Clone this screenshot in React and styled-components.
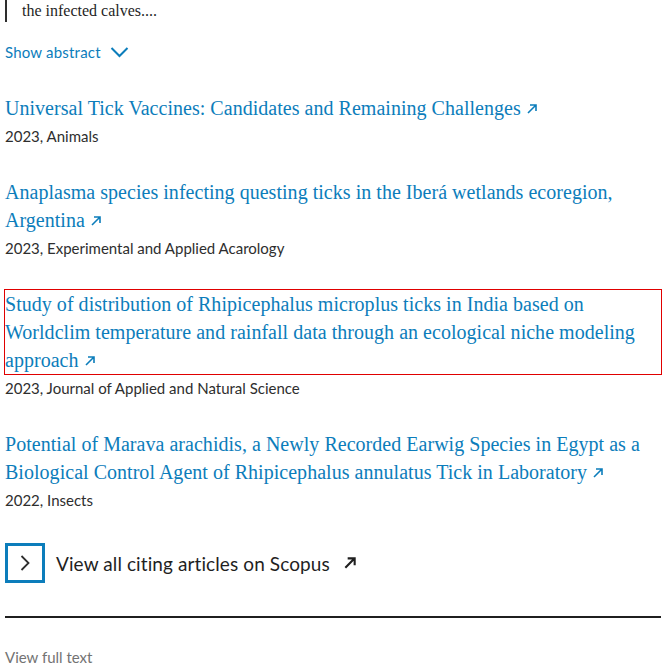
import React from "react";
import styled, { createGlobalStyle } from "styled-components";

const Global = createGlobalStyle`
  html, body { margin: 0; padding: 0; background: #fff; }
  body { font-family: "Lato", "Open Sans", sans-serif; }
`;

const Page = styled.div`
  padding: 0 5px;
  width: 656px;
`;

const Abstract = styled.div`
  border-left: 2px solid #2e2e2e;
  padding-left: 15px;
  font-family: "Liberation Serif", serif;
  font-size: 16px;
  line-height: 21px;
  color: #1f1f1f;
  padding-bottom: 1px;
`;

const ShowAbstract = styled.button`
  display: flex;
  align-items: center;
  gap: 9px;
  margin: 20px 0 0 0;
  padding: 0;
  border: none;
  background: none;
  font-family: "Lato", sans-serif;
  font-size: 15px;
  letter-spacing: 0.2px;
  color: #0c7dbb;
  line-height: 20px;
  cursor: pointer;
`;

const List = styled.div`
  display: flex;
  flex-direction: column;
  gap: 28px;
  margin-top: 32px;
`;

const Item = styled.div``;

const Title = styled.a`
  display: block;
  font-family: "Liberation Serif", serif;
  font-size: 20px;
  letter-spacing: 0.03px;
  line-height: 28px;
  color: #0c7dbb;
  text-decoration: none;
  outline: ${(p) => (p.$focused ? "1px solid #e00000" : "none")};
`;

const Meta = styled.div`
  font-family: "Lato", sans-serif;
  font-size: 15px;
  line-height: 28px;
  color: #2e2e2e;
`;

const Scopus = styled.a`
  display: flex;
  align-items: center;
  gap: 11px;
  margin-top: 29px;
  text-decoration: none;
  color: #1f1f1f;
  font-family: "Lato", sans-serif;
  font-size: 19px;
  letter-spacing: 0.1px;
`;

const ArrowBox = styled.span`
  display: flex;
  align-items: center;
  justify-content: center;
  width: 34px;
  height: 34px;
  border: 3px solid #0c7dbb;
`;

const Rule = styled.hr`
  border: none;
  height: 2px;
  background: #1f1f1f;
  margin: 33px 0 0 0;
`;

const FullText = styled.div`
  margin-top: 29px;
  font-family: "Lato", sans-serif;
  font-size: 15px;
  color: #737373;
  line-height: 20px;
`;

const Ext = ({ size = 12, color = "#0c7dbb", stroke = 1.6, gap = 5 }) => (
  <svg width={size} height={size} viewBox="0 0 12 12" style={{ marginLeft: gap, verticalAlign: "baseline" }}>
    <path d="M2 10 L10 2 M4 2 H10 V8" fill="none" stroke={color} strokeWidth={stroke} />
  </svg>
);

const items = [
  { t: "Universal Tick Vaccines: Candidates and Remaining Challenges", m: "2023, Animals" },
  { t: "Anaplasma species infecting questing ticks in the Iberá wetlands ecoregion, Argentina", m: "2023, Experimental and Applied Acarology" },
  { t: "Study of distribution of Rhipicephalus microplus ticks in India based on Worldclim temperature and rainfall data through an ecological niche modeling approach", m: "2023, Journal of Applied and Natural Science", f: true },
  { t: "Potential of Marava arachidis, a Newly Recorded Earwig Species in Egypt as a Biological Control Agent of Rhipicephalus annulatus Tick in Laboratory", m: "2022, Insects" },
];

export default function App() {
  return (
    <Page>
      <Global />
      <Abstract>the infected calves....</Abstract>
      <ShowAbstract>
        Show abstract
        <svg width="19" height="12" viewBox="0 0 19 12">
          <path d="M1.5 2 L9.5 10 L17.5 2" fill="none" stroke="#0c7dbb" strokeWidth="2" />
        </svg>
      </ShowAbstract>
      <List>
        {items.map((it, i) => (
          <Item key={i}>
            <Title href="#" $focused={it.f}>
              {it.t}
              <Ext />
            </Title>
            <Meta>{it.m}</Meta>
          </Item>
        ))}
      </List>
      <Scopus href="#">
        <ArrowBox>
          <svg width="12" height="18" viewBox="0 0 12 18">
            <path d="M2.5 2 L9.5 9 L2.5 16" fill="none" stroke="#2e2e2e" strokeWidth="1.8" />
          </svg>
        </ArrowBox>
        <span>View all citing articles on Scopus</span>
        <Ext size={14} color="#1f1f1f" stroke={1.8} gap={2} />
      </Scopus>
      <Rule />
      <FullText>View full text</FullText>
    </Page>
  );
}
